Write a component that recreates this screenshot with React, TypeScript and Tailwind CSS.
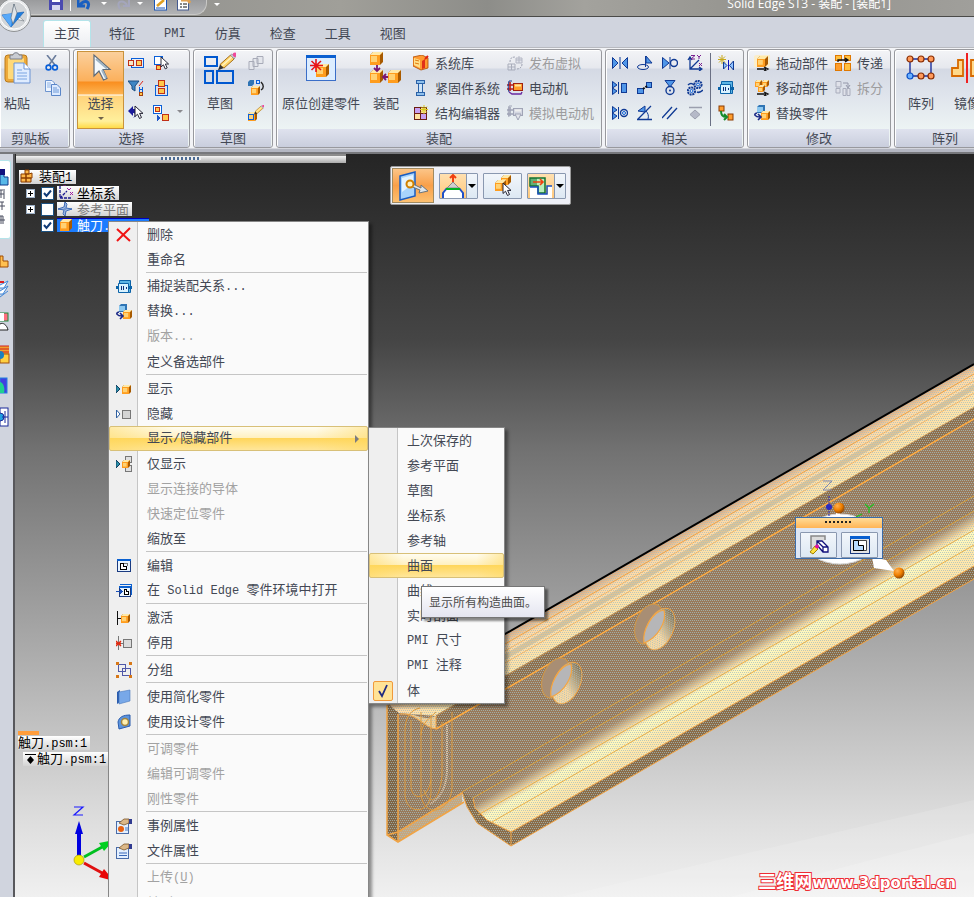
import { Fragment, type ReactNode } from 'react'

type IconProps = { children: ReactNode; size?: number; crisp?: boolean }

function Icon({ children, size = 16, crisp }: IconProps) {
  return (
    <svg
      width={size}
      height={size}
      viewBox={`0 0 ${size} ${size}`}
      fill="none"
      className="shrink-0"
      shapeRendering={crisp ? 'crispEdges' : undefined}
      aria-hidden="true"
    >
      {children}
    </svg>
  )
}

// Latin runs are set in mono, one size down from the Chinese text
function Txt({ children }: { children: string }) {
  return (
    <span>
      {children.split(/([\x20-\x7e]+)/).map((part, i) =>
        /^[\x20-\x7e]+$/.test(part) ? (
          <span key={i} className="font-['Liberation_Mono',monospace] text-[12px] whitespace-pre">
            {part}
          </span>
        ) : (
          <Fragment key={i}>{part}</Fragment>
        )
      )}
    </span>
  )
}

function Cube({ x, y, s, gray }: { x: number; y: number; s: number; gray?: boolean }) {
  const d = Math.round(s / 4)
  const f = s - d
  return (
    <g transform={`translate(${x} ${y})`}>
      <path d={`M0 ${d}L${d} 0H${s}V${f}L${f} ${s}H0Z`} fill={gray ? '#b9b9b9' : '#a85a00'} />
      <path d={`M0 ${d}L${d} 0H${s}L${f} ${d}Z`} fill={gray ? '#f2f2f2' : '#ffe9a8'} />
      <rect x="0" y={d} width={f} height={f} fill={gray ? '#dcdcdc' : '#ff9d1e'} />
      <rect x="1" y={d + 1} width={f * 0.6} height={f * 0.6} fill={gray ? '#fff' : '#ffe08a'} opacity=".8" />
    </g>
  )
}

function Cursor({ x, y, k = 1 }: { x: number; y: number; k?: number }) {
  return (
    <path
      transform={`translate(${x} ${y}) scale(${k})`}
      d="M0 0V10.5L2.5 8.2L4.5 12.5L6.5 11.5L4.6 7.4H8Z"
      fill="#fff"
      stroke="#223"
      strokeWidth="1"
    />
  )
}

function Pencil({ x, y, k = 1 }: { x: number; y: number; k?: number }) {
  return (
    <g transform={`translate(${x} ${y}) scale(${k})`}>
      <path d="M0 16L2 10.5L5.5 14Z" fill="#333" />
      <path d="M2 10.5L11.5 2L15 5.5L5.5 14Z" fill="#ffd66b" stroke="#9a5b00" strokeWidth=".8" />
      <path d="M3.5 12L13 3.5" stroke="#fff4c4" strokeWidth="1.4" />
      <path d="M11.5 2L13 .8L16 4L15 5.5Z" fill="#c9c9d6" stroke="#666" strokeWidth=".4" />
      <circle cx="15.6" cy="1.6" r="2" fill="#f0489a" />
    </g>
  )
}

const blue = '#0a5fd8'
const deep = '#103a94'

const PasteIcon = () => (
  <Icon size={32}>
    <rect x="4" y="3" width="22" height="27" rx="3" fill="#eda93a" stroke="#b97a1c" />
    <rect x="7" y="6" width="16" height="21" rx="1" fill="#ffd979" />
    <path d="M9 7V3H12C12 0 18 0 18 3H21V7Z" fill="#c9ccd2" stroke="#7a7f8a" />
    <path d="M13 11H23L29 17V31H13Z" fill="#dfecff" stroke="#6a93d4" />
    <path d="M23 11V17H29" fill="#fff" stroke="#6a93d4" />
    <path d="M16 18H21M16 21H26M16 24H26M16 27H26" stroke="#7ba5e2" />
  </Icon>
)
const CutIcon = () => (
  <Icon>
    <path d="M2 0L10 10M11 0L4 10" stroke="#6b7d9c" strokeWidth="1.6" />
    <circle cx="3.500" cy="12.500" r="2.400" stroke={blue} strokeWidth="1.6" />
    <circle cx="10" cy="12.500" r="2.400" stroke={blue} strokeWidth="1.6" />
  </Icon>
)
const CopyIcon = () => (
  <Icon>
    <path d="M.5.5H7L9.5 3V11.5H.5Z" fill="#eef5ff" stroke="#6d94cf" />
    <path d="M2 3H6M2 5H7M2 7H7" stroke="#8db1e4" />
    <path d="M6.500 4.500H12L15.500 8V15.500H6.500Z" fill="#dceaff" stroke="#5a86c8" />
    <path d="M8 8H12M8 10H14M8 12H14" stroke="#6f9ad8" />
  </Icon>
)
const ArrowIcon = () => (
  <Icon size={32}>
    <path d="M9 3V24L14 19L18.500 28L22 26.500L18 17.500H25Z" fill="#f4f8fb" stroke="#5d6a78" strokeWidth="1.2" />
    <path d="M11 7L22 16.500M17 18L21 26" stroke="#9fb4c4" strokeWidth="2" />
  </Icon>
)

const selectIcons = [
  <Icon crisp>
    <rect x="3.500" y="3.500" width="12" height="9" stroke={blue} />
    <rect x=".5" y="5.500" width="5" height="5" fill="#f8e8c8" stroke="#c03018" />
    <rect x="8.500" y="5.500" width="5" height="5" fill="#ffcf5c" stroke="#c03018" />
  </Icon>,
  <Icon>
    <rect x="1.500" y="1.500" width="8" height="8" fill="#fff" stroke={blue} />
    <rect x="3.500" y="10.500" width="4" height="4" fill="#ffc84a" stroke="#c03018" />
    <Cursor x={8} y={2} k={0.95} />
  </Icon>,
  <Icon>
    <path d="M0 1H11L7 6V11L4 9V6Z" fill="#3f86c4" stroke="#1d4e82" />
    <path d="M15 1L11 6" stroke="#e02a1a" />
    <path d="M11.500 7V12M14.500 7V12M11.500 9.500H14.500" stroke={blue} />
    <rect x="11.500" y="12.500" width="3" height="3" fill="#ffc84a" stroke="#a04010" />
  </Icon>,
  <Icon crisp>
    <rect x="2.500" y="5.500" width="12" height="10" stroke={blue} />
    <rect x="5.500" y=".5" width="6" height="6" fill="#ffc84a" stroke="#c03018" />
    <rect x="5.500" y="8.500" width="6" height="5" fill="#ffc84a" stroke="#c03018" />
  </Icon>,
  <Icon>
    <path d="M0 6L5 1V4H8C11 4 10 11 5 13C8 10 7 8 5 8V11Z" fill="#1b1b9c" />
    <Cursor x={7} y={1} />
  </Icon>,
  <Icon crisp>
    <rect x=".5" y=".5" width="8" height="8" fill="#fff" stroke={blue} />
    <rect x="2.500" y="2.500" width="4" height="4" fill="#ffc84a" stroke="#c03018" />
    <path d="M4 10L8 13L4 16Z" fill="#1e56c8" />
    <rect x="9.500" y="9.500" width="6" height="6" fill="#ffc84a" stroke="#c03018" />
  </Icon>,
]

const SketchIcon = () => (
  <Icon size={32}>
    <g stroke="#0058d0" strokeWidth="2">
      <rect x="1" y="5" width="12" height="9" />
      <rect x="1" y="19" width="8" height="12" />
      <rect x="13" y="19" width="16" height="12" />
    </g>
    <Pencil x={14} y={1} k={1.08} />
  </Icon>
)
const sketchSmall = [
  <Icon>
    <path d="M1 6.500H6V14.500H1ZM5 3.500H10V11.500H5ZM9 1.500H15V8.500H9Z" fill="#e4e6ec" stroke="#a8abb8" />
  </Icon>,
  <Icon>
    <path d="M0 2L2 0H6V4L4 6H0Z" fill="#2f74b4" />
    <rect x="8.500" y=".5" width="3" height="3" fill="#cfe4ff" stroke={blue} />
    <path d="M13 2C16 5 16 8 13 10" stroke="#222" strokeWidth="1.4" />
    <Cube x={3} y={6} s={9} />
  </Icon>,
  <Icon>
    <Cube x={0} y={7} s={9} />
    <rect x=".5" y="9.500" width="5" height="5" stroke={blue} />
    <Pencil x={6} y={0} k={0.6} />
  </Icon>,
]

const InPlaceIcon = () => (
  <Icon size={32}>
    <rect x="1.500" y="3.500" width="29" height="25" fill="#dcedff" stroke="#3a6ec8" />
    <rect x="1" y="3" width="30" height="3" fill="#0a5fd0" />
    <Cube x={11} y={12} s={13} />
    <path d="M11 7V20M5 13.500H18M6.500 9L16 18M16 9L6.500 18" stroke="#e8131a" strokeWidth="1.6" />
  </Icon>
)
const AssembleIcon = () => (
  <Icon size={32}>
    <Cube x={0} y={0} s={13} />
    <Cube x={0} y={18} s={13} />
    <Cube x={18} y={18} s={13} />
    <path d="M7 13V18M4 16L7 19L10 16" stroke="#7a1670" strokeWidth="1.800" />
    <path d="M13 25H18M16 22L13 25L16 28" stroke="#7a1670" strokeWidth="1.800" />
  </Icon>
)
const LibraryIcon = () => (
  <Icon>
    <path d="M0 2L9 0L15 3V13L8 15L0 11Z" fill="#ff9a30" stroke="#b04a00" strokeWidth=".8" />
    <path d="M1 3L7 5V13L1 10Z" fill="#ffe08a" />
    <path d="M9 6L12 4V13L9 14Z" fill="#e03018" />
    <path d="M2 5L6 6M2 8L6 9" stroke="#e07810" />
    <path d="M12 4L15 1" stroke="#e02010" strokeWidth="2" />
  </Icon>
)
const BoltIcon = () => (
  <Icon>
    <rect x="3.500" y=".5" width="8" height="3" fill="#8fc0ec" stroke="#2b62a8" />
    <rect x="5.500" y="3.500" width="4" height="9" fill="#cfe6fa" stroke="#2b62a8" />
    <rect x="3.500" y="12.500" width="8" height="3" fill="#8fc0ec" stroke="#2b62a8" />
  </Icon>
)
const StructIcon = () => (
  <Icon>
    <rect x="1.500" y="2.500" width="12" height="12" fill="#ffe4a0" stroke="#6a1e10" />
    <rect x="2" y="3" width="5" height="5" fill="#c8a0f0" />
    <rect x="8" y="9" width="5" height="5" fill="#c8a0f0" />
    <path d="M7.500 2.500V14.500M1.500 8.500H13.500" stroke="#6a1e10" />
    <path d="M11 0V9M7 4.500H15M8 1.500L14 7.500M14 1.500L8 7.500" stroke="#d8c820" />
  </Icon>
)
const PublishIcon = () => (
  <Icon>
    <path d="M1 9H8V15H1ZM1 12H8M4.500 9V15" stroke="#a9adbb" />
    <path d="M9 3H15V8H9ZM12 1V8M9 5H15" fill="#e2e4ec" stroke="#b4b7c4" />
    <path d="M3 7C3 3 5 2 8 2M15 9C15 12 13 14 10 14" stroke="#9ea2b2" strokeDasharray="2 1" />
  </Icon>
)
const MotorIcon = ({ gray }: { gray?: boolean }) => (
  <Icon>
    <rect x="6.500" y="3.500" width="9" height="7" fill={gray ? '#d4d7e2' : '#ff9d2c'} stroke={gray ? '#a0a4b6' : '#a02010'} />
    <path d="M8 5.500H14" stroke={gray ? '#eee' : '#ffe49a'} strokeWidth="2" />
    <path d="M0 5H6M0 9H6M3 2V11" stroke={gray ? '#a0a4b6' : '#b81c1c'} strokeWidth="1.600" />
    <path d="M5 1H2C1 4 1 10 2 12" stroke={gray ? '#a0a4b6' : '#243a8c'} />
    {gray ? (
      <path d="M8 9H14L11 15Z" fill="#e4e6ec" stroke="#a0a4b6" />
    ) : (
      <path d="M2 12L5 14H14L15 12" stroke="#6a2aa0" strokeWidth="1.400" />
    )}
  </Icon>
)

const tri = { fill: '#4f96e8', stroke: deep }
const relIcons = [
  <Icon>
    <path d="M.5 2.500L6 8L.5 13.500ZM15.500 2.500L10 8L15.500 13.500Z" {...tri} />
    <path d="M8 2V14" stroke={deep} />
  </Icon>,
  <Icon>
    <path d="M8.500 1V12" stroke={deep} />
    <path d="M9 1L15 8H9Z" {...tri} />
    <ellipse cx="6" cy="12" rx="5.500" ry="2.500" stroke={deep} />
  </Icon>,
  <Icon>
    <path d="M.5 2.500L7 8L.5 13.500Z" {...tri} />
    <path d="M8 2V14" stroke={deep} />
    <circle cx="12" cy="8" r="3.500" stroke={deep} strokeWidth="1.400" />
  </Icon>,
  <Icon>
    <path d="M3 3V14H14M3 14L12 5M1 5L3 2L5 5M12 12L15 14L12 16" stroke={deep} strokeWidth="1.300" />
    <path d="M4 .5H8L4 4H8M10 0L12 2L14 0M12 2V4M12 8L15 11M15 8L12 11" stroke="#7a2090" />
  </Icon>,
  <Icon>
    <path d="M.5 1.500L5 5L.5 8ZM.5 8L5 11L.5 14.500Z" {...tri} />
    <path d="M6.500 2V14" stroke={deep} />
    <rect x="9.500" y="3.500" width="5" height="9" {...tri} />
  </Icon>,
  <Icon>
    <rect x=".5" y="8.500" width="6" height="5" {...tri} />
    <rect x="9.500" y="2.500" width="5" height="5" {...tri} />
    <path d="M6 9L10 6" stroke="#111" strokeWidth="2" strokeDasharray="2 1" />
  </Icon>,
  <Icon>
    <path d="M3 .5H13L8 7Z" {...tri} />
    <circle cx="8" cy="10.500" r="4" stroke={deep} strokeWidth="1.400" />
    <circle cx="8" cy="10.500" r="1" fill={deep} />
  </Icon>,
  <Icon>
    <circle cx="11" cy="4.500" r="3.600" stroke={deep} strokeWidth="2" strokeDasharray="2 .7" />
    <circle cx="11" cy="4.500" r="1.500" stroke={blue} />
    <circle cx="4.500" cy="11" r="3.600" stroke={deep} strokeWidth="2" strokeDasharray="2 .7" />
    <circle cx="4.500" cy="11" r="1.500" stroke={blue} />
    <path d="M1 5C3 3 5 3 7 5M10 12C12 13 14 12 16 10" stroke={deep} strokeWidth="1.500" />
  </Icon>,
  <Icon>
    <path d="M.5 1.500L5 5L.5 8ZM.5 8L5 11L.5 14.500Z" {...tri} />
    <path d="M6.500 2V14" stroke={deep} />
    <circle cx="12" cy="8" r="3.500" stroke={deep} strokeWidth="1.400" />
    <circle cx="12" cy="8" r="1.500" stroke={blue} />
  </Icon>,
  <Icon>
    <path d="M0 14.500H15M1 14L14 1" stroke={deep} strokeWidth="1.300" />
    <path d="M1 6L8 1V7Z" {...tri} />
    <path d="M9 6C11 8 12 11 11 14" stroke={deep} />
  </Icon>,
  <Icon>
    <path d="M0 13L10 2M5 14L15 3" stroke={deep} strokeWidth="1.300" />
  </Icon>,
  <Icon>
    <path d="M2 2.500H15" stroke="#9b9fae" strokeWidth="1.500" />
    <path d="M8 5L13 9.500L8 14L3 9.500Z" fill="#b5b9c8" stroke="#9b9fae" />
  </Icon>,
]
const CaptureIcon = () => (
  <Icon>
    <path d="M3.500 1.500H14.500V13.500H3.500Z" fill="#5cb4e4" stroke="#0c63a8" />
    <path d="M2.500 4.500H12.500V13.500H2.500Z" fill="#d8f2ff" stroke="#0c63a8" />
    <path d="M0 8.500H2M13 8.500H16" stroke="#0c63a8" strokeWidth="3" />
    <path d="M5.500 7V11M7.500 7V11M10.500 8V10" stroke="#10307a" />
  </Icon>
)
const relSide = [
  <Icon>
    <path d="M4 0V9M0 4.500H8M1 1.500L7 7.500M7 1.500L1 7.500" stroke="#c8a818" />
    <path d="M5.500 7V14L9 10.500ZM15.500 6V15L11.500 10.500Z" fill="#8fc2ff" stroke={deep} />
    <path d="M10.500 5V15" stroke="#11b" />
  </Icon>,
  <CaptureIcon />,
  <Icon>
    <rect x="1" y="1" width="5" height="5" fill="#ff9d2c" stroke="#8a3a00" />
    <rect x="10" y="9" width="5" height="6" fill="#ff9d2c" stroke="#8a3a00" />
    <path d="M3 6C3 10 5 12 8 12M6 9L9 12L6 15" stroke="#178a2a" strokeWidth="2" />
  </Icon>,
]

const DragIcon = () => (
  <Icon>
    <path d="M0 1L2 0H16V11L14 12H0Z" fill="#fbeecb" />
    <Cube x={3} y={1} s={11} />
    <path d="M3 14H12M10 12L14 14L10 16" stroke="#111" strokeWidth="1.300" />
  </Icon>
)
const MoveIcon = () => (
  <Icon>
    <Cube x={1} y={0} s={7} />
    <Cube x={8} y={0} s={7} />
    <Cube x={4} y={5} s={7} />
    <path d="M3 14H12M10 12L14 14L10 16" stroke="#111" strokeWidth="1.300" />
  </Icon>
)
const ReplaceIcon = () => (
  <Icon>
    <path d="M3 2L5 0H11V6L9 8H3Z" fill="#2f74b4" />
    <rect x="3" y="2" width="6" height="5" fill="#8cc8f0" />
    <Cube x={7} y={6} s={9} />
    <path d="M3 8C-1 9 1 12 6 12M4 9L7 12L4 15" stroke="#1c2a88" strokeWidth="1.600" />
  </Icon>
)
const TransferIcon = () => (
  <Icon>
    <rect x=".5" y=".5" width="6" height="5" fill="#ffc040" stroke="#e07800" />
    <rect x="9.500" y=".5" width="6" height="5" fill="#ffc040" stroke="#e07800" />
    <rect x=".5" y="8.500" width="6" height="7" fill="#ff9d2c" stroke="#e07800" />
    <rect x="9.500" y="8.500" width="6" height="7" fill="#ffc040" stroke="#e07800" />
    <path d="M3 7V5H12M10 3L13 5L10 7" stroke="#111" strokeWidth="1.300" />
  </Icon>
)
const SplitIcon = () => (
  <Icon>
    <path d="M1 1.500H6V7H1ZM8 8.500H11V15.500H8ZM12 8.500H15V15.500H12ZM1 8.500H5V13H1Z" fill="#dfe1e9" stroke="#a9adbc" />
    <path d="M8 3H13V7M11 5L13 8L15 5" stroke="#9498aa" />
  </Icon>
)
const PatternIcon = () => (
  <Icon size={32}>
    <path d="M5 7H26V24H5Z" stroke="#1d2f9c" strokeWidth="1.400" />
    {[5, 16, 26].map((x) => (
      <Fragment key={x}>
        <circle cx={x} cy="7" r="3" fill="#ff9a5a" stroke="#8a2c00" strokeWidth="1.200" />
        <circle cx={x} cy="24" r="3" fill={x === 5 ? '#6ab0ff' : '#ff9a5a'} stroke={x === 5 ? '#0a50c8' : '#8a2c00'} strokeWidth="1.200" />
      </Fragment>
    ))}
  </Icon>
)
const MirrorIcon = () => (
  <Icon size={32}>
    <path d="M7 8H12V24H1V16H7Z" fill="#ffd98a" stroke="#d86a00" strokeWidth="1.800" />
    <path d="M25 8H20V24H31V16H25Z" fill="#ffd98a" stroke="#d86a00" strokeWidth="1.800" />
    <path d="M16 1V31" stroke="#f02020" strokeWidth="2" />
  </Icon>
)

function Group({ title, className, children }: { title: string; className: string; children: ReactNode }) {
  return (
    <section
      aria-label={title}
      className={`flex h-[99px] shrink-0 flex-col rounded-[3px] border border-[#98999e] bg-[linear-gradient(#f3f4f7_0,#e6e8ee_18px,#d4d9e4_19px,#dfe4ec_45px,#edf4f4_80px)] shadow-[inset_1px_1px_0_#fff] ${className}`}
    >
      <div className="flex flex-1">{children}</div>
      <h2 className="mx-px h-[18px] bg-[linear-gradient(#dfe2ee,#c9cedd)] text-center leading-[18px]">{title}</h2>
    </section>
  )
}

function BigButton({ label, icon, className = '' }: { label: string; icon: ReactNode; className?: string }) {
  return (
    <button className={`flex shrink-0 flex-col items-center gap-[9px] pt-[2px] whitespace-nowrap ${className}`}>
      {icon}
      <span className="leading-5">{label}</span>
    </button>
  )
}

function Column({ items, className = '' }: { items: { name: string; icon: ReactNode; off?: boolean; bare?: boolean }[]; className?: string }) {
  return (
    <div className={`flex shrink-0 flex-col ${className}`}>
      {items.map((it) => (
        <button
          key={it.name}
          aria-label={it.name}
          disabled={it.off}
          className="flex h-[25px] items-center gap-[6px] whitespace-nowrap disabled:text-[#9c9c9e]"
        >
          {it.icon}
          {!it.bare && <span>{it.name}</span>}
        </button>
      ))}
    </div>
  )
}

const bare = (icons: ReactNode[], names: string[]) => icons.map((icon, i) => ({ name: names[i], icon, bare: true }))

function TitleBar() {
  return (
    <header className="relative flex h-[17px] items-start overflow-hidden border-b border-[#4a4a48] bg-[linear-gradient(90deg,#8a8a88,#a09f99_35%,#8d8d89_50%,#a3a29d_60%,#93928d_80%,#a09f9b)]">
      <div className="flex h-[15px] w-[207px] items-start rounded-br-[12px] border-r border-b border-[#c8c8c6] bg-[linear-gradient(#9a9b9d,#b2b3b5)] pl-12">
        <Icon>
          <path d="M1 -4H15V10H1Z" fill="#4a4ab0" />
          <rect x="4" y="-3" width="8" height="5" fill="#fff" />
          <rect x="4" y="5" width="8" height="5" fill="#d8d8f0" />
        </Icon>
        <span className="ml-[6px] h-[11px] w-px bg-white" />
        <span className="ml-[6px] flex items-start">
          <Icon>
            <path d="M1 0V6H8M3 5C7 -1 15 1 10 9" stroke="#1a5fc0" strokeWidth="3" />
          </Icon>
          <span className="mt-[2px] ml-[8px] border-x-[3px] border-t-[3px] border-x-transparent border-t-white" />
        </span>
        <span className="ml-[7px] flex items-start">
          <Icon>
            <path d="M15 0V6H9M13 5C9 -1 1 1 6 9" stroke="#a4a6bc" strokeWidth="2" />
          </Icon>
          <span className="mt-[2px] ml-[7px] border-x-[3px] border-t-[3px] border-x-transparent border-t-white" />
        </span>
        <span className="ml-[8px] flex gap-2">
          <Icon>
            <rect x="3.500" y="-2" width="12" height="12" fill="#fff" stroke="#1a56b8" />
            <path d="M5 8H14" stroke="#1a56b8" />
            <path d="M6 6L13 0" stroke="#e0a020" strokeWidth="2.500" />
          </Icon>
          <Icon>
            <rect x="2.500" y="-2" width="11" height="12" fill="#fff" stroke="#445a90" />
            <path d="M5 4H7M8 4H12M5 7H7M8 7H12" stroke="#111" />
            <path d="M6 0H13L15 3" stroke="#e0a050" strokeWidth="3" />
          </Icon>
        </span>
      </div>
      <span className="mt-[3px] ml-[7px] border-x-[3px] border-t-[3px] border-x-transparent border-t-white" />
      <h1 className="mr-[83px] ml-auto -mt-[4px] font-['Open_Sans','Noto_Sans_CJK_SC',sans-serif] text-[12px] leading-4 text-white">
        Solid Edge ST3 - 装配 - [装配1]
      </h1>
    </header>
  )
}

function Tabs() {
  return (
    <nav className="relative flex h-[30px] items-end gap-[7px] bg-[#d0d4de] pl-[43px]">
      <button aria-label="应用程序" className="absolute -top-[19px] -left-[3px] z-10">
        <Icon size={34}>
          <circle cx="17" cy="17" r="16.500" fill="#e9ebed" stroke="#8f9294" />
          <circle cx="17" cy="17" r="14" fill="#d2d5d8" stroke="#fff" />
          <path d="M17 6L18 15L27 23L14 20Z" fill="#fff" stroke="#7a828a" strokeWidth=".7" />
          <path d="M5 17L27 14L14 29Z" fill="#1f7fe0" stroke="#0d58b0" strokeWidth=".6" />
          <path d="M5 17L16 15L14 29Z" fill="#67b4ff" opacity=".8" />
          <path d="M17 6L20 15L16 26L14 20Z" fill="#dfe4e8" stroke="#5a6a7a" strokeWidth=".6" />
        </Icon>
      </button>
      {['主页', '特征', 'PMI', '仿真', '检查', '工具', '视图'].map((t, i) => (
        <button
          key={t}
          className={
            i === 0
              ? 'h-[27px] rounded-t-[3px] border border-b-0 border-[#b4e4ea] bg-[linear-gradient(#fff,#eceef2)] px-[10px] pb-[3px]'
              : 'h-[27px] px-[11px] pb-[2px]'
          }
        >
          <Txt>{t}</Txt>
        </button>
      ))}
    </nav>
  )
}

function Ribbon() {
  return (
    <div className="flex h-[107px] items-start gap-[3px] overflow-hidden border-t border-b-2 border-[#b8bac0] border-b-[#77787c] bg-[linear-gradient(#f2f3f6_0,#f2f3f6_100px,#b4b7c2_101px)] pt-px">
      <Group title="剪贴板" className="w-[70px] rounded-l-none border-l-0 [&_h2]:pr-2">
        <BigButton label="粘贴" icon={<PasteIcon />} className="pl-px" />
        <Column className="ml-[12px]" items={bare([<CutIcon />, <CopyIcon />], ['剪切', '复制'])} />
      </Group>
      <Group title="选择" className="w-[117px]">
        <button className="mt-px ml-[3px] flex h-[78px] w-[47px] shrink-0 flex-col items-center border border-[#c9933c] bg-[linear-gradient(#fbd09c_0,#fbb05c_29px,#f98e1f_30px,#fdb452_42px,#fff_43px,#ffd37c_44px,#fff09c_69px,#ffd83c_77px)]">
          <ArrowIcon />
          <span className="mt-[9px] leading-5">选择</span>
          <span className="mt-[4px] border-x-3 border-t-3 border-x-transparent border-t-[#70624a]" />
        </button>
        <div className="ml-1 grid grid-cols-2 content-start gap-x-[9px]">
          {selectIcons.map((icon, i) => (
            <button key={i} aria-label={`选择工具 ${i + 1}`} className="flex h-[25px] items-center">
              {icon}
            </button>
          ))}
        </div>
        <span className="mt-[60px] ml-[8px] h-0 border-x-3 border-t-3 border-x-transparent border-t-[#8a8a8e]" />
      </Group>
      <Group title="草图" className="w-[80px]">
        <BigButton label="草图" icon={<SketchIcon />} className="pl-[10px]" />
        <Column className="ml-3" items={bare(sketchSmall, ['复制草图', '传送草图', '编辑草图'])} />
      </Group>
      <Group title="装配" className="w-[326px]">
        <BigButton label="原位创建零件" icon={<InPlaceIcon />} className="pl-[5px]" />
        <BigButton label="装配" icon={<AssembleIcon />} className="ml-[10px]" />
        <Column
          className="ml-[11px]"
          items={[
            { name: '系统库', icon: <LibraryIcon /> },
            { name: '紧固件系统', icon: <BoltIcon /> },
            { name: '结构编辑器', icon: <StructIcon /> },
          ]}
        />
        <Column
          className="ml-[7px]"
          items={[
            { name: '发布虚拟', icon: <PublishIcon />, off: true },
            { name: '电动机', icon: <MotorIcon /> },
            { name: '模拟电动机', icon: <MotorIcon gray />, off: true },
          ]}
        />
      </Group>
      <Group title="相关" className="w-[139px]">
        <div className="ml-[6px] grid grid-cols-4 content-start gap-x-[9px]">
          {relIcons.map((icon, i) => (
            <button key={i} aria-label={`关系 ${i + 1}`} className="flex h-[25px] items-center">
              {icon}
            </button>
          ))}
        </div>
        <div className="mt-[3px] ml-[7px] h-[73px] w-px bg-[#6a7084]" />
        <Column className="ml-[7px]" items={bare(relSide, ['组装', '捕捉装配关系', '链接'])} />
      </Group>
      <Group title="修改" className="w-[144px]">
        <Column
          className="ml-[6px]"
          items={[
            { name: '拖动部件', icon: <DragIcon /> },
            { name: '移动部件', icon: <MoveIcon /> },
            { name: '替换零件', icon: <ReplaceIcon /> },
          ]}
        />
        <Column
          className="ml-[7px]"
          items={[
            { name: '传递', icon: <TransferIcon /> },
            { name: '拆分', icon: <SplitIcon />, off: true },
          ]}
        />
      </Group>
      <Group title="阵列" className="w-[102px]">
        <BigButton label="阵列" icon={<PatternIcon />} className="ml-[10px]" />
        <BigButton label="镜像" icon={<MirrorIcon />} className="ml-[14px]" />
      </Group>
    </div>
  )
}

function SideBar() {
  return (
    <aside className="flex w-[15px] shrink-0 flex-col items-start overflow-hidden border-r-2 border-[#58585c] bg-[#d0d4de] pt-[6px]">
      <button aria-label="路径查找器" className="h-[79px] w-[11px] overflow-hidden rounded-r-[3px] border border-l-0 border-[#b4e4ea] bg-white">
        <svg width="10" height="76" viewBox="0 0 10 76" fill="none" aria-hidden="true">
          <path d="M0 8H4V15H8V23H0Z" fill="#58b8e8" stroke="#103a8c" />
          <rect x="0" y="7" width="5" height="6" fill="#10107c" />
          <path d="M0 28H3M4 27V37M0 32H4M1 28V36M0 40H4M0 44H5M2 40V48M0 54H3V62M0 58H5M1 54V62" stroke="#4a4f60" />
        </svg>
      </button>
      <svg width="10" height="190" viewBox="0 0 10 190" fill="none" className="mt-3" aria-hidden="true">
        <path d="M0 5H3V10H8V16H0Z" fill="#ffc050" stroke="#a04a00" />
        <path d="M0 34L8 30L4 37H0M0 40L8 35L3 43H0M0 46L8 40" fill="#fff" stroke="#3f86d8" />
        <path d="M0 31H4" stroke="#e02020" strokeWidth="2" />
        <rect x="0" y="62" width="8" height="8" fill="#ff7080" stroke="#1a8a3a" />
        <rect x="0" y="62" width="4" height="8" fill="#fff" />
        <path d="M0 73C3 71 7 74 8 79H0" fill="#fff" stroke="#222" />
        <rect x="0" y="95" width="9" height="8" fill="#f0a030" />
        <path d="M0 95H9M0 98H9M0 101H9" stroke="#d02020" />
        <rect x="0" y="103" width="9" height="9" fill="#ffd040" stroke="#a05010" />
        <circle cx="0" cy="104" r="4" fill="#1a80c0" />
        <rect x="0" y="127" width="7" height="15" fill="#4040e0" stroke="#2080e0" />
        <path d="M0 131C4 132 5 138 4 142H0Z" fill="#20d090" />
        <rect x="0" y="157" width="8" height="18" fill="#fff" stroke="#1a2a9a" />
        <circle cx="0" cy="166" r="4" fill="#20a0e0" stroke="#1a2a9a" />
        <path d="M5 160V172M2 166H8" stroke="#1a2a9a" />
      </svg>
    </aside>
  )
}

// Sheet-metal rail, drawn in window coordinates
function Model() {
  const hole = (
    <g>
      <ellipse cx="556" cy="678" rx="13" ry="21" transform="rotate(22 556 678)" fill="#a88e74" stroke="#d09848" />
      <ellipse cx="567" cy="683" rx="13" ry="22" transform="rotate(24 567 683)" fill="url(#bore)" stroke="#f5a540" />
      <ellipse cx="567" cy="683" rx="13" ry="22" transform="rotate(24 567 683)" fill="url(#dots)" />
      <path d="M551 697C549 686 558 666 571 664C574 675 565 692 551 697Z" fill="#b6b6b8" stroke="#f5a540" strokeWidth="1.200" />
    </g>
  )
  return (
    <svg className="absolute inset-0 size-full" viewBox="15 154 959 743" preserveAspectRatio="xMinYMin slice" fill="none" aria-hidden="true">
      <defs>
        <pattern id="dots" width="2" height="4" patternUnits="userSpaceOnUse" shapeRendering="crispEdges">
          <path d="M0 0H1V1H0ZM1 2H2V3H1Z" fill="#a3bfc0" />
        </pattern>
        <linearGradient id="bore" x1="580" y1="665" x2="555" y2="700" gradientUnits="userSpaceOnUse">
          <stop stopColor="#6e6048" />
          <stop offset=".6" stopColor="#ffd9a0" />
          <stop offset="1" stopColor="#ffdca0" />
        </linearGradient>
        <linearGradient id="bend" x1="700" y1="664" x2="735" y2="724" gradientUnits="userSpaceOnUse">
          <stop stopColor="#99795a" />
          <stop offset=".12" stopColor="#a98866" />
          <stop offset=".26" stopColor="#f4d49c" />
          <stop offset=".34" stopColor="#fff8be" />
          <stop offset=".42" stopColor="#fff4b8" />
          <stop offset=".6" stopColor="#ffe6aa" />
          <stop offset="1" stopColor="#ffe4a8" />
        </linearGradient>
        <linearGradient id="flange" x1="700" y1="522" x2="718" y2="553" gradientUnits="userSpaceOnUse">
          <stop stopColor="#d8a880" />
          <stop offset=".3" stopColor="#ffd9a6" />
          <stop offset="1" stopColor="#ffe4a8" />
        </linearGradient>
        <radialGradient id="ball" cx=".35" cy=".3" r=".8">
          <stop stopColor="#ffb050" />
          <stop offset=".5" stopColor="#f08000" />
          <stop offset="1" stopColor="#7a3800" />
        </radialGradient>
      </defs>
      <path d="M974 800V897H560Z" fill="#fff" opacity=".14" />
      <path d="M974 833V897H730Z" fill="#fff" opacity=".16" />

      {/* web */}
      <path d="M387 705L974 408V512L473 798L462 793L462 803L398 842L387 835Z" fill="#99795a" />
      {/* top flange */}
      <path d="M387 702L974 364V408L436 716L398 713Z" fill="url(#flange)" />
      <path d="M505 654L974 384V390L505 660Z" fill="#cdb890" opacity=".7" />
      <path d="M436 715L974 407V419L436 729Z" fill="#8f6f4c" />
      {/* lower lip */}
      <path d="M473 798L974 511V566L511 832L487 820L475 808Z" fill="url(#bend)" />
      <path d="M462 792L473 798L475 808L487 820L511 832L974 566V579L511 846L477 823L467 807Z" fill="#8b6c48" />
      {/* left edge */}
      <path d="M387 705L398 712V842L387 835Z" fill="#806444" />
      <path d="M398 832L462 793V803L398 842Z" fill="#c9a67c" />
      <path d="M400 714C416 712 422 722 436 716V729C424 728 414 712 400 714Z" fill="#f0cd94" />

      <path d="M387 702L974 364V579L511 846L477 823L464 803L398 842L387 835Z" fill="url(#dots)" opacity=".75" />

      <g stroke="#f0a446">
        <path d="M505 644L974 374" />
        <path d="M505 651L974 381M505 663L974 393" opacity=".6" />
        <path d="M436 729L974 419" stroke="#ffab40" strokeWidth="1.500" />
        <path d="M436 716L974 407" opacity=".5" />
        <path d="M462 792L974 496M473 798L974 511" stroke="#d6a03c" />
        <path d="M478 815L974 530M492 822L974 545" stroke="#e8b04c" />
        <path d="M387 705V835L398 842L464 802M398 714V842M387 835L398 832L462 793" strokeWidth="1.500" />
        <path d="M462 792L467 807L477 823L511 846L974 579M473 798L475 808L487 820L511 832L974 566M511 832V846" />
        <path d="M400 714C416 712 424 728 436 729V716" />
        {/* slot */}
        <path d="M405 728V795C406 815 430 815 431 793V715M411 720V785C411 802 428 800 431 780M421 712V795C424 818 450 814 452 788V712M442 722V775C440 800 430 808 424 790M405 728C406 716 411 710 420 708M421 735C422 722 430 718 436 712" stroke="#dc9c40" />
      </g>
      <path d="M447 725V772C446 788 440 798 430 804" stroke="#f4e0c4" strokeWidth="2" strokeDasharray="1 1" opacity=".7" />
      <path d="M387 702L974 364" stroke="#000" strokeWidth="2" />

      {hole}
      <g transform="translate(93 -54)">{hole}</g>

      {/* steering wheel */}
      <ellipse cx="840" cy="539" rx="36" ry="25" fill="#fff" stroke="#d8d8d8" />
      <path d="M829 496V518" stroke="#2a2ac0" strokeDasharray="2 1" />
      <circle cx="829" cy="507" r="3" fill="#2a2ac0" />
      <path d="M838 512V520" stroke="#fff" strokeWidth="4" />
      <path d="M872 557L886 560L894 571L874 568Z" fill="#fff" />
      <circle cx="839" cy="508" r="5.500" fill="url(#ball)" />
      <circle cx="899" cy="573" r="5.500" fill="url(#ball)" />
      <path d="M823 481H832L823 490H832" stroke="#8088b0" />
      <path d="M865 504L869 508L874 504M869 508V513M856 517L862 514" stroke="#20c020" strokeWidth="1.300" />

      {/* triad */}
      <path d="M74 807H83L74 815H83" stroke="#1a1aff" strokeWidth="1.200" />
      <path d="M79 857V830" stroke="#0000e0" strokeWidth="4" />
      <path d="M79 821L83 834H75Z" fill="#0000e0" />
      <path d="M84 857L104 846" stroke="#00c020" strokeWidth="3" />
      <path d="M114 840L104 851L99 843Z" fill="#00d020" />
      <path d="M84 863L104 874" stroke="#e01010" strokeWidth="3" />
      <path d="M114 881L99 877L104 869Z" fill="#e80808" />
      <circle cx="79" cy="860" r="5" fill="#f8ec00" stroke="#a09000" strokeWidth=".6" />
    </svg>
  )
}

const tagClass = 'flex h-[14px] items-center bg-[linear-gradient(#fff,#d4d4d4)] leading-[14px] whitespace-nowrap text-black'

function TreeRow({ icon, label, checked, expand, tag = '' }: { icon: ReactNode; label: string; checked: boolean; expand?: boolean; tag?: string }) {
  return (
    <li className="flex h-4 items-center">
      {expand ? (
        <button aria-label={`展开 ${label}`} className="flex size-[9px] items-center justify-center border border-[#9fb2c8] bg-white">
          <Icon size={7} crisp>
            <path d="M1 3.500H6M3.500 1V6" stroke="#000" />
          </Icon>
        </button>
      ) : (
        <span className="w-[9px]" />
      )}
      <span className="relative ml-[6px] size-[13px]">
        <input
          type="checkbox"
          aria-label={label}
          defaultChecked={checked}
          className="peer block size-[13px] appearance-none border border-[#1c5180] bg-white"
        />
        <svg viewBox="0 0 13 13" fill="none" aria-hidden="true" className="pointer-events-none absolute inset-0 hidden peer-checked:block">
          <path d="M3 6L5.500 9L10 3.500" stroke="#123c78" strokeWidth="2" />
        </svg>
      </span>
      <span className={`ml-[3px] gap-1 pr-[3px] ${tagClass} ${tag}`}>
        {icon}
        <Txt>{label}</Txt>
      </span>
    </li>
  )
}

function Tree() {
  return (
    <div className="relative ml-[4px] pt-[7px] text-black">
      <div className={`w-[57px] gap-1 ${tagClass}`}>
        <Icon>
          <g stroke="#8a3c00" fill="#ffb84a">
            <path d="M6 1H10V5H6ZM2 5H7V9H2ZM2 9H7V13H2ZM7 9H12V13H7ZM7 5H10L13 4V9H7Z" />
          </g>
        </Icon>
        <Txt>装配1</Txt>
      </div>
      <ul className="mt-px ml-[7px]">
        <TreeRow
          expand
          checked
          label="坐标系"
          icon={
            <Icon>
              <path d="M3 1V13H15M3 13L10 6" stroke="#1a1a90" strokeWidth="1.300" strokeDasharray="3 1" />
              <path d="M6 0H9M10 3L12 5L14 3M13 7L16 10M16 7L13 10" stroke="#a020a0" />
            </Icon>
          }
        />
        <TreeRow
          expand
          checked={false}
          label="参考平面"
          tag="text-[#7c7c7c]!"
          icon={
            <Icon>
              <path d="M1 8L7 6L8 1L10 3L9 7L15 8L9 10L8 15L6 13L7 9Z" fill="#d4e4fa" stroke="#3f6cb8" />
              <path d="M1 8H15M8 1V15" stroke="#3f6cb8" strokeWidth=".8" />
            </Icon>
          }
        />
        <TreeRow
          checked
          label="触刀.psm:1"
          tag="border-t border-[#0000c0] bg-none! bg-[#1c7cff]! text-white!"
          icon={
            <Icon>
              <Cube x={3} y={1} s={12} />
            </Icon>
          }
        />
      </ul>
    </div>
  )
}

const splitBtn = 'flex h-[26px] items-center justify-center rounded-[1px] border border-[#8a98b0] bg-[linear-gradient(#f2f6fb,#dde8f3)]'
const warm = 'flex h-full flex-1 items-center justify-center border-r border-[#8a98b0] bg-[linear-gradient(#ffe0b0,#ffc87c)]'

function Caret() {
  return <span className="mx-px border-x-[4px] border-t-[4px] border-x-transparent border-t-black" />
}

function ViewToolbar() {
  return (
    <div role="toolbar" aria-label="选择选项" className="absolute top-[12px] left-[375px] flex h-[39px] w-[181px] items-center gap-[5px] rounded-[2px] border border-[#9a9a9a] bg-[#eef0f7] pl-px">
      <button aria-label="共面" className="flex h-[35px] w-[42px] shrink-0 items-center justify-center border border-[#a08a60] bg-[linear-gradient(#fcc588,#f9a04a_50%,#fdc070)]">
        <Icon size={32}>
          <path d="M3 6L18 2V26L3 30Z" fill="#a8d4fc" stroke="#1a5cc0" strokeWidth="1.500" />
          <path d="M5 8L16 5V14L5 22Z" fill="#e4f3ff" />
          <path d="M14 13L24 18V15L31 21L22 23L23 20L13 16Z" fill="#dfe6ec" stroke="#68747e" />
          <circle cx="13" cy="14" r="3.500" fill="#fff0c0" stroke="#d08000" strokeWidth="2" />
        </Icon>
      </button>
      <button aria-label="方向" className={`w-[39px] shrink-0 ${splitBtn}`}>
        <span className={warm}>
          <Icon size={24}>
            <path d="M2 24V19L6 14H18L22 19V24Z" fill="#fff" />
            <path d="M2 24V19L6 14M22 24V19L18 14" stroke="#2050c8" strokeWidth="2" />
            <path d="M12 8L18 14H6Z" fill="#cfcfcf" stroke="#888" />
            <path d="M5 15H19" stroke="#00b020" strokeWidth="2" />
            <path d="M12 8V2M9 4L12 1L15 4" stroke="#f04010" strokeWidth="2" />
          </Icon>
        </span>
        <Caret />
      </button>
      <button aria-label="选择部件" className={`w-[39px] shrink-0 ${splitBtn}`}>
        <Icon size={24}>
          <Cube x={10} y={1} s={10} />
          <Cube x={4} y={6} s={11} />
          <Cursor x={12} y={9} />
        </Icon>
      </button>
      <button aria-label="剖面" className={`w-[39px] shrink-0 ${splitBtn}`}>
        <span className={warm}>
          <Icon size={24}>
            <path d="M1 13H9V20H19V12H23V24H1Z" fill="#fff" />
            <path d="M1 4H16V19H9V12H1Z" fill="#b8eebc" stroke="#107030" strokeWidth="1.500" />
            <path d="M3 4V12M5 4V12M7 4V12" stroke="#107030" />
            <path d="M1 13H9V20H18V12H23" stroke="#1a50c0" strokeWidth="1.500" />
            <path d="M4 8H14M11 5L14 8L11 11" stroke="#f04010" strokeWidth="1.600" />
          </Icon>
        </span>
        <Caret />
      </button>
    </div>
  )
}

const EditShape = () => (
  <>
    <rect x="1.500" y="2.500" width="13" height="11" fill="#e8f4ff" stroke="#1a3a80" />
    <rect x="1" y="1" width="14" height="2" fill="#0a60d0" />
    <path d="M4.500 5.500H7.500V8.500H10.500V11.500H4.500Z" fill="#fff" stroke="#000" />
    <path d="M8 5.500H11.500V8" stroke="#777" />
  </>
)

function MiniToolbar() {
  return (
    <div role="toolbar" aria-label="命令条" className="absolute top-[363px] left-[780px] w-[88px] border border-[#3c6ca8] bg-[#dde6f4]">
      <div className="flex h-[10px] justify-center bg-[linear-gradient(#ffdc98,#ffb455)] pt-[3px]">
        <span className="h-[2px] w-7 bg-[repeating-linear-gradient(90deg,#222_0_2px,transparent_2px_4px)]" />
      </div>
      <div className="flex gap-1 px-1 pt-1">
        <button aria-label="编辑定义" className={`flex-1 ${splitBtn}`}>
          <Icon size={22}>
            <path d="M3 15V2H17V6" fill="#dcdcdc" stroke="#888" strokeWidth="1.500" />
            <path d="M9 7H14L20 13V18H15L9 11ZM15 18V13H20M15 13L9 7" fill="#fff" stroke="#10107c" strokeWidth="1.300" />
            <path d="M2 18L7 12L10 15L5 20Z" fill="#ffe040" stroke="#a08000" />
            <circle cx="9" cy="12.500" r="2" fill="#e010a0" />
          </Icon>
        </button>
        <button aria-label="编辑" className={`flex-1 ${splitBtn}`}>
          <Icon size={22}>
            <rect x="1.500" y="3.500" width="19" height="16" fill="#e4e4e4" stroke="#1a3a80" />
            <rect x="1" y="2" width="20" height="3" fill="#0a60d0" />
            <path d="M4.500 6.500H17.500V16.500H4.500Z" fill="#fff" stroke="#444" />
            <path d="M4.500 6.500H9.500V11.500H14.500V16.500H4.500Z" fill="#b8dcff" stroke="#000" />
          </Icon>
        </button>
      </div>
    </div>
  )
}

type Entry = { label: ReactNode; name: string; icon?: ReactNode; off?: boolean; open?: boolean } | null

const item = (name: string, icon?: ReactNode, off?: boolean): Entry => ({ name, label: <Txt>{name}</Txt>, icon, off })

const entries: Entry[] = [
  item('删除', <Icon><path d="M1 2L14 14M14 1L1 14" stroke="#f01414" strokeWidth="2" /></Icon>),
  item('重命名'),
  null,
  item('捕捉装配关系...', <CaptureIcon />),
  item('替换...', <ReplaceIcon />),
  item('版本...', undefined, true),
  item('定义备选部件'),
  null,
  item('显示', <Icon><path d="M0 4L4 8L0 12Z" fill="#2890a8" stroke="#123c60" /><Cube x={6} y={4} s={9} /></Icon>),
  item('隐藏', <Icon><path d="M.5 4L4 8L.5 12Z" fill="#fff" stroke="#3060a0" /><rect x="6.500" y="4.500" width="8" height="8" fill="#d4d4d4" stroke="#777" /></Icon>),
  { name: '显示/隐藏部件', label: <Txt>显示/隐藏部件</Txt>, open: true },
  item('仅显示', <Icon><rect x="9.500" y=".5" width="6" height="6" fill="#e0e0e0" stroke="#777" /><rect x="9.500" y="9.500" width="6" height="6" fill="#e0e0e0" stroke="#777" /><path d="M0 4L4 8L0 12Z" fill="#2890a8" stroke="#123c60" /><Cube x={6} y={4} s={8} /></Icon>),
  item('显示连接的导体', undefined, true),
  item('快速定位零件', undefined, true),
  item('缩放至'),
  null,
  item('编辑', <Icon crisp><EditShape /></Icon>),
  item('在 Solid Edge 零件环境中打开', <Icon crisp><path d="M4 1.500H15V11.500" stroke="#0a60d0" /><rect x="3.500" y="3.500" width="11" height="10" fill="#e8f4ff" stroke="#1a3a80" /><rect x="3" y="3" width="12" height="2" fill="#0a60d0" /><path d="M8.500 6.500H10.500V8.500H12.500V11.500H8.500Z" fill="#fff" stroke="#000" /><path d="M0 8.500H6M4 6.500L6 8.500L4 10.500" stroke="#1a50b8" /></Icon>),
  null,
  item('激活', <Icon><path d="M1.500 1V15M1.500 8.500H6" stroke="#111" /><Cube x={5} y={4} s={9} /></Icon>),
  item('停用', <Icon><path d="M2.500 1V15M3 8.500H7" stroke="#777" /><path d="M0 6L5 11M5 6L0 11M0 8.500H5" stroke="#e02a10" strokeWidth="1.400" /><rect x="7.500" y="4.500" width="8" height="8" fill="#dcdcdc" stroke="#777" /></Icon>),
  null,
  item('分组', <Icon crisp><path d="M2.500 2.500H9.500V9.500H2.500ZM6.500 6.500H14.500V13.500H6.500Z" stroke="#5058a8" /><path d="M0 0H3V3H0ZM13 0H16V3H13ZM0 13H3V16H0ZM13 13H16V16H13Z" fill="#d87818" /></Icon>),
  null,
  item('使用简化零件', <Icon><path d="M1 3L4 1V13L1 15Z" fill="#2a5cae" /><path d="M3 3L14 1V12L3 15Z" fill="#78a8e8" stroke="#4a78bc" strokeWidth=".6" /></Icon>),
  item('使用设计零件', <Icon><path d="M2 8C3 3 7 1 14 1V12L3 15Z" fill="#5c94dc" stroke="#2a5cae" /><circle cx="9" cy="8" r="3.500" fill="#fff0b0" stroke="#a08440" strokeWidth="1.500" /></Icon>),
  null,
  item('可调零件', undefined, true),
  item('编辑可调零件', undefined, true),
  item('刚性零件', undefined, true),
  null,
  item('事例属性', <Icon><rect x=".5" y="3.500" width="12" height="12" fill="#e4f0ff" stroke="#4a6ca8" /><circle cx="5" cy="11" r="3" fill="#e86010" /><path d="M9 10H12M9 12H12" stroke="#4a78c0" /><path d="M3 5L8 1H13V5L8 7Z" fill="#dcb888" stroke="#7a5428" strokeWidth=".8" /><rect x="13" y="1" width="3" height="5" fill="#303a90" /></Icon>),
  item('文件属性', <Icon><rect x=".5" y="4.500" width="12" height="11" fill="#e4f0ff" stroke="#4a6ca8" /><path d="M3 10H11M3 12.500H11" stroke="#3a68b8" /><path d="M3 5L8 1H13V5L8 7Z" fill="#dcb888" stroke="#7a5428" strokeWidth=".8" /><rect x="13" y="1" width="3" height="5" fill="#303a90" /></Icon>),
  null,
  { name: '上传', label: <>上传<span className="font-['Liberation_Mono',monospace] text-[12px]">(<u>U</u>)</span></>, off: true },
  item('转到', undefined, true),
]

const hot = 'rounded-[2px] border border-[#d8c078] bg-[linear-gradient(90deg,rgba(255,216,92,.5),transparent_25%,transparent_80%,rgba(255,216,92,.5)),linear-gradient(#fffdf2,#fff0bf_48%,#ffd65c_50%,#ffe69a)]'
const panel = 'border border-[#868686] bg-[linear-gradient(90deg,#efefef_28px,#c5c5c5_28px,#c5c5c5_29px,#fafafa_29px)] shadow-[3px_3px_3px_rgba(0,0,0,.4)]'

function ContextMenu() {
  return (
    <div role="menu" aria-label="部件" className={`absolute top-[67px] left-[93px] w-[261px] ${panel}`}>
      {entries.map((e, i) =>
        e === null ? (
          <div key={i} role="separator" className="mr-px ml-[37px] h-[2px] border-t border-[#c5c5c5]" />
        ) : (
          <button
            key={i}
            role="menuitem"
            disabled={e.off}
            className={`flex h-[25px] w-full items-center text-left whitespace-nowrap disabled:text-[#a2a2a2] ${e.open ? hot : 'border border-transparent'}`}
          >
            <span className="ml-[6px] w-[31px]">{e.icon}</span>
            <span className="flex-1 pb-[2px]">{e.label}</span>
            {e.open && <span className="mr-2 border-y-[4px] border-l-[4px] border-y-transparent border-l-[#7c7c80]" />}
          </button>
        )
      )}
    </div>
  )
}

function SubMenu() {
  const names = ['上次保存的', '参考平面', '草图', '坐标系', '参考轴', '曲面', '曲线', '实时剖面', 'PMI 尺寸', 'PMI 注释', '体']
  return (
    <div role="menu" aria-label="显示/隐藏部件" className={`absolute top-[273px] left-[353px] w-[137px] ${panel}`}>
      {names.map((n) => (
        <button
          key={n}
          role="menuitem"
          className={`flex h-[25px] w-full items-center text-left whitespace-nowrap ${n === '曲面' ? hot : 'border border-transparent'}`}
        >
          <span className="ml-[3px] flex w-[34px]">
            {n === '体' && (
              <span className="flex size-5 items-center justify-center rounded-[2px] border border-[#f09a3c] bg-[#ffe296]">
                <Icon>
                  <path d="M4 8L7 13L12 2" stroke="#202a80" strokeWidth="1.800" />
                </Icon>
              </span>
            )}
          </span>
          <span className="pb-[2px]">
            <Txt>{n}</Txt>
          </span>
        </button>
      ))}
    </div>
  )
}

function Viewport() {
  return (
    <main className="relative flex-1 overflow-hidden bg-[linear-gradient(#252525,#454545_25%,#727272_40%,#a9a9a9_66%,#dedede_90%,#f0f0f0)]">
      <Model />
      <div className="relative ml-px h-[9px] w-[330px] border-t-2 border-[#8c8c8c] bg-[linear-gradient(#f4f4f4,#aaa)]">
        <span className="mt-px ml-[145px] block h-[3px] w-10 bg-[repeating-linear-gradient(90deg,#4a6a94_0_2px,#eee_2px_4px)]" />
      </div>
      <Tree />

      <div className="absolute top-[577px] left-[3px]">
        <div className="h-[4px] w-[21px] bg-[#ff9d3c]" />
        <div className={`mt-px w-[72px] ${tagClass}`}>
          <Txt>触刀.psm:1</Txt>
        </div>
        <div className={`mt-[2px] ml-[5px] w-[86px] ${tagClass}`}>
          <Icon size={14}>
            <path d="M2 2.500H13" stroke="#000" />
            <path d="M7.500 4L11 8L7.500 12L4 8Z" fill="#000" />
          </Icon>
          <Txt>触刀.psm:1</Txt>
        </div>
      </div>

      <ViewToolbar />
      <MiniToolbar />
      <ContextMenu />
      <SubMenu />
      <div role="tooltip" className="absolute top-[432px] left-[406px] border border-[#767676] bg-[linear-gradient(#fff,#e4e5f0)] px-[7px] text-[12px] leading-[30px] whitespace-nowrap text-[#4c4c4c] shadow-[3px_3px_2px_rgba(0,0,0,.45)]">
        显示所有构造曲面。
      </div>
      <a
        href="#"
        className="absolute right-[18px] bottom-[2px] font-['DejaVu_Sans','Noto_Sans_CJK_SC',sans-serif] text-[15px] leading-6 font-bold whitespace-nowrap text-white [-webkit-text-stroke:2px_#ee2c34] [paint-order:stroke_fill]"
      >
        <span className="text-[18px]">三维网</span>www.3dportal.cn
      </a>
    </main>
  )
}

export default function App() {
  return (
    <div className="flex h-screen flex-col overflow-hidden bg-[#d0d4de] font-['Noto_Sans_CJK_SC',sans-serif] text-[13px] text-[#434854]">
      <TitleBar />
      <Tabs />
      <Ribbon />
      <div className="flex min-h-0 flex-1">
        <SideBar />
        <Viewport />
      </div>
    </div>
  )
}
